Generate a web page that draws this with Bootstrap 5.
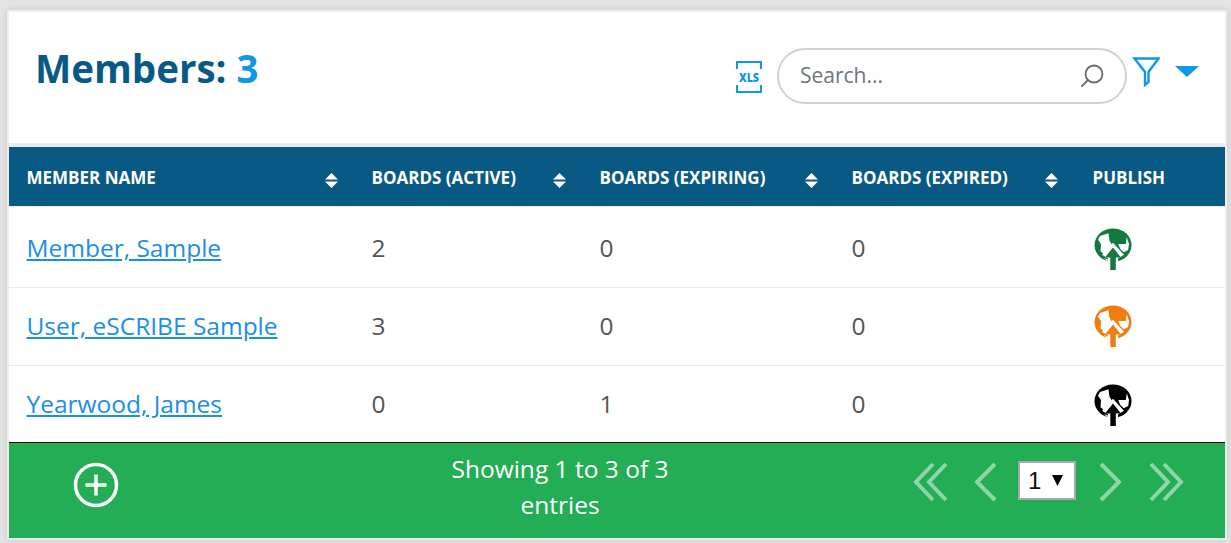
<!DOCTYPE html>
<html lang="en">
<head>
  <meta charset="UTF-8">
  <meta name="viewport" content="width=device-width, initial-scale=1.0">
  <title>Members</title>
  <link href="https://cdn.jsdelivr.net/npm/bootstrap@5.3.3/dist/css/bootstrap.min.css" rel="stylesheet">
  <style>
    html, body {
      height: 100%;
      overflow: hidden;
    }
    body {
      background: #e4e4e4;
      font-family: "Open Sans", sans-serif;
      padding: 10px 4px 3px 7px;
    }
    .panel-frame {
      background: #fff;
      border: 2px solid #eeeeee;
      box-shadow: 0 0 7px rgba(0, 0, 0, .12);
      height: 530px;
      width: 1220px;
      display: flex;
      flex-direction: column;
    }
    .panel-top {
      height: 131px;
      flex: none;
      padding: 0 26px;
      border-bottom: 4px solid #ececf0;
      box-sizing: content-box;
    }
    .panel-title {
      font-size: 38.5px;
      font-weight: 700;
      color: #085a85;
      margin: 0 0 19px;
      line-height: 52px;
    }
    .panel-title span { color: #0f97e8; }
    .tools-box { margin-bottom: 4px; }
    .xls-icon { margin-top: 3px; }
    .search-box {
      width: 350px;
      height: 56px;
      border: 2px solid #ced1d6;
      border-radius: 28px;
      padding: 0 21px;
      margin: 0 5px 0 15px;
    }
    .search-box input {
      border: 0;
      outline: 0;
      width: 270px;
      font-size: 21px;
      color: #555;
      background: transparent;
      padding: 0;
    }
    .search-box input::placeholder { color: #6c757d; opacity: 1; }
    .filter-icon { margin-bottom: 8px; }
    .caret-icon { margin: 0 0 7px 15px; }
    .member-table {
      width: 1216px;
      table-layout: fixed;
      border-collapse: collapse;
      flex: none;
    }
    .member-table th {
      background: #085a85;
      color: #fff;
      height: 59px;
      font-size: 17px;
      font-weight: 700;
      padding: 2px 18px 0 17.500px;
      text-transform: uppercase;
      position: relative;
      border-bottom: 1px solid #ececf0;
    }
    .member-table th svg {
      position: absolute;
      top: 26px;
    }
    .member-table td {
      font-size: 24.500px;
      color: #555;
      padding: 2px 18px 0 17.500px;
      height: 78px;
      vertical-align: middle;
      border-bottom: 1px solid #e8e8ee;
    }
    .member-table tr:first-child td { height: 81px; padding-top: 4px; }
    .member-table tr:nth-child(2) td { padding-top: 0; }
    .member-table tr:last-child td {
      height: 77px;
      border-bottom: 1px solid #111;
    }
    .member-table a { color: #1b8fe6; }
    .globe-cell svg { display: block; margin-left: 1px; filter: blur(.35px); }
    .panel-foot {
      background: #23ad55;
      color: #fff;
      flex: 1;
      font-size: 24.500px;
      line-height: 36px;
    }
    .foot-add { margin: 19px 0 0 64px; }
    .foot-info { width: 240px; margin: 8px 0 0 321px; text-align: center; }
    .foot-pager { margin: 18px 41px 0 auto; }
    .foot-pager > svg { margin-top: 1px; }
    .page-pick {
      width: 58px;
      height: 39px;
      background: #fff;
      border: 2px solid #a9a9a9;
      color: #111;
      position: relative;
      font-size: 24px;
      line-height: 35px;
      padding-left: 8px;
      margin: 0 23px 0 21px;
      font-family: "Liberation Sans", sans-serif;
    }
    .page-pick svg { position: absolute; right: 11px; top: 12px; }
    .pager-first { margin-right: 24px; }
    .pager-next { margin-right: 25px; }
  </style>
</head>
<body>
  <div class="panel-frame">
    <div class="panel-top d-flex align-items-center justify-content-between">
      <h1 class="panel-title">Members: <span>3</span></h1>
      <div class="tools-box d-flex align-items-center">
        <svg class="xls-icon" width="26" height="32" viewBox="0 0 26 32" fill="none" stroke="#0f97e8" stroke-width="2">
          <path d="M1 8V1H25V8M1 24V31H25V24"/>
          <text x="13" y="20.500" text-anchor="middle" textLength="20" lengthAdjust="spacingAndGlyphs" font-family="'Open Sans',sans-serif" font-size="12.500" font-weight="800" fill="#0f97e8" stroke="none">XLS</text>
        </svg>
        <div class="search-box d-flex align-items-center justify-content-between">
          <input type="text" placeholder="Search...">
          <svg width="24" height="24" viewBox="0 0 24 24" fill="none" stroke="#6f6a64" stroke-width="1.800">
            <circle cx="14" cy="10" r="8.500"/>
            <path d="M8 16L2 22" stroke-linecap="round"/>
          </svg>
        </div>
        <svg class="filter-icon" width="28" height="30" viewBox="0 0 28 30" fill="none" stroke="#0f97e8" stroke-width="2.400">
          <path d="M2.500 1.500H26.500L16.500 15V25L13 28V15Z"/>
        </svg>
        <svg class="caret-icon" width="24" height="12" viewBox="0 0 24 12"><path d="M0 0H24L12 11Z" fill="#0f97e8"/></svg>
      </div>
    </div>

    <table class="member-table">
      <colgroup>
        <col style="width: 345px"><col style="width: 228px"><col style="width: 252px"><col style="width: 241px"><col style="width: 150px">
      </colgroup>
      <thead>
        <tr>
          <th>Member Name<svg style="left: 316px" width="13" height="15" viewBox="0 0 13 15"><path d="M6.500 0L13 6.500H0ZM6.500 15L0 8.500H13Z" fill="#fff"/></svg></th>
          <th>Boards (Active)<svg style="left: 199px" width="13" height="15" viewBox="0 0 13 15"><path d="M6.500 0L13 6.500H0ZM6.500 15L0 8.500H13Z" fill="#fff"/></svg></th>
          <th>Boards (Expiring)<svg style="left: 223px" width="13" height="15" viewBox="0 0 13 15"><path d="M6.500 0L13 6.500H0ZM6.500 15L0 8.500H13Z" fill="#fff"/></svg></th>
          <th>Boards (Expired)<svg style="left: 211px" width="13" height="15" viewBox="0 0 13 15"><path d="M6.500 0L13 6.500H0ZM6.500 15L0 8.500H13Z" fill="#fff"/></svg></th>
          <th>Publish</th>
        </tr>
      </thead>
      <tbody>
        <tr>
          <td><a href="#">Member, Sample</a></td><td>2</td><td>0</td><td>0</td>
          <td class="globe-cell"><svg width="38" height="42" viewBox="0 0 38 44" preserveAspectRatio="none"><use href="#publish-globe" color="#13793f"/></svg></td>
        </tr>
        <tr>
          <td><a href="#">User, eSCRIBE Sample</a></td><td>3</td><td>0</td><td>0</td>
          <td class="globe-cell"><svg width="38" height="42" viewBox="0 0 38 44" preserveAspectRatio="none"><use href="#publish-globe" color="#ef7d12"/></svg></td>
        </tr>
        <tr>
          <td><a href="#">Yearwood, James</a></td><td>0</td><td>1</td><td>0</td>
          <td class="globe-cell"><svg width="38" height="42" viewBox="0 0 38 44" preserveAspectRatio="none"><use href="#publish-globe" color="#000"/></svg></td>
        </tr>
      </tbody>
    </table>

    <div class="panel-foot d-flex align-items-start">
      <svg class="foot-add flex-shrink-0" width="46" height="46" viewBox="0 0 46 46" fill="none" stroke="#fff">
        <circle cx="23" cy="23" r="20.500" stroke-width="3.500"/>
        <path d="M23 12.500V33.500M12.500 23H33.500" stroke-width="3.500"/>
      </svg>
      <div class="foot-info">Showing 1 to 3 of 3 entries</div>
      <div class="foot-pager d-flex align-items-start">
        <svg class="pager-first" width="36" height="40" viewBox="0 0 36 40" fill="none" stroke="#8fd5a8" stroke-width="4">
          <path d="M20 2L3 20L20 38M33 2L16 20L33 38"/>
        </svg>
        <svg width="24" height="40" viewBox="0 0 24 40" fill="none" stroke="#8fd5a8" stroke-width="4">
          <path d="M22 2L4 20L22 38"/>
        </svg>
        <div class="page-pick">1<svg width="11" height="11" viewBox="0 0 11 11"><path d="M0 0H11L5.500 11Z" fill="#000"/></svg></div>
        <svg class="pager-next" width="24" height="40" viewBox="0 0 24 40" fill="none" stroke="#8fd5a8" stroke-width="4">
          <path d="M2 2L20 20L2 38"/>
        </svg>
        <svg width="36" height="40" viewBox="0 0 36 40" fill="none" stroke="#8fd5a8" stroke-width="4">
          <path d="M3 2L20 20L3 38M16 2L33 20L16 38"/>
        </svg>
      </div>
    </div>
  </div>

  <svg width="0" height="0" class="position-absolute">
    <symbol id="publish-globe" viewBox="0 0 38 44">
      <ellipse cx="19" cy="18" rx="18.500" ry="17.500" fill="currentColor"/>
      <path fill="#fff" d="M6 8.500L14.500 5.500L15.500 13.300L18 17.500L12.300 23.300L10.200 27.500L6.500 24.300L7 16.800L4 12.200Z"/>
      <path fill="#fff" d="M24.200 16.800H31.800L32.800 9.700L35 16.800L34.200 23L29.800 25.500L26.300 22Z"/>
      <path fill="#fff" d="M10 31.500L15 33.500L13 34.500Z"/>
      <path fill="#fff" d="M19 15.500L30 28L24 32V44H14V32L8 28Z"/>
      <path fill="currentColor" d="M19 20.500L27 31H21.800V44H16.300V31H11Z"/>
    </symbol>
  </svg>
</body>
</html>
